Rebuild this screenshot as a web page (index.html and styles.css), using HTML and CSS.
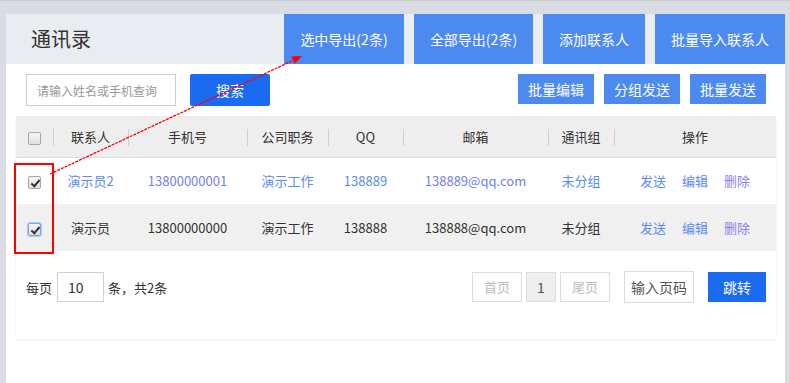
FILE: index.html
```html
<!DOCTYPE html>
<html>
<head>
    <meta charset="utf-8">
    <title>通讯录</title>
    <link rel="stylesheet" href="styles.css">
</head>
<body>
    <div class="page">
        <div class="panel">
            <div class="panel-head">
                <h1 class="title">通讯录</h1>
                <div class="head-actions">
                    <a class="head-btn w120">选中导出(2条)</a>
                    <a class="head-btn w119">全部导出(2条)</a>
                    <a class="head-btn w102">添加联系人</a>
                    <a class="head-btn w130">批量导入联系人</a>
                </div>
            </div>

            <div class="toolbar">
                <input class="search-input" type="text" placeholder="请输入姓名或手机查询">
                <button class="btn-search">搜索</button>
                <div class="toolbar-right">
                    <button class="btn-light">批量编辑</button>
                    <button class="btn-light">分组发送</button>
                    <button class="btn-light">批量发送</button>
                </div>
            </div>

            <div class="card">
                <table class="contacts">
                    <colgroup>
                        <col style="width:37px">
                        <col style="width:75px">
                        <col style="width:119px">
                        <col style="width:81px">
                        <col style="width:75px">
                        <col style="width:145px">
                        <col style="width:66px">
                        <col style="width:162px">
                    </colgroup>
                    <thead>
                        <tr>
                            <th><input class="cb" type="checkbox"></th>
                            <th>联系人</th>
                            <th>手机号</th>
                            <th>公司职务</th>
                            <th>QQ</th>
                            <th>邮箱</th>
                            <th>通讯组</th>
                            <th>操作</th>
                        </tr>
                    </thead>
                    <tbody>
                        <tr class="row-link">
                            <td><input class="cb" type="checkbox" checked></td>
                            <td class="link">演示员2</td>
                            <td class="link-alt">13800000001</td>
                            <td class="link">演示工作</td>
                            <td class="link">138889</td>
                            <td class="link-alt">138889@qq.com</td>
                            <td class="link">未分组</td>
                            <td class="ops">
                                <a class="op">发送</a><a class="op">编辑</a><a class="op op-del">删除</a>
                            </td>
                        </tr>
                        <tr class="row-alt">
                            <td><input class="cb cb-focus" type="checkbox" checked></td>
                            <td>演示员</td>
                            <td>13800000000</td>
                            <td>演示工作</td>
                            <td>138888</td>
                            <td>138888@qq.com</td>
                            <td>未分组</td>
                            <td class="ops">
                                <a class="op">发送</a><a class="op">编辑</a><a class="op op-del">删除</a>
                            </td>
                        </tr>
                    </tbody>
                </table>

                <div class="pager">
                    <div class="pager-size">
                        <span>每页</span>
                        <input class="size-input" type="text" value="10">
                        <span>条，共2条</span>
                    </div>
                    <div class="pager-nav">
                        <a class="page-btn disabled">首页</a>
                        <a class="page-btn current">1</a>
                        <a class="page-btn disabled">尾页</a>
                        <input class="page-input" type="text" placeholder="输入页码">
                        <button class="btn-jump">跳转</button>
                    </div>
                </div>
            </div>
        </div>

        <div class="mark-box"></div>
        <svg class="mark-arrow" width="790" height="383" viewBox="0 0 790 383">
            <line x1="50" y1="173" x2="294" y2="59" stroke="#f00" stroke-width="1.3" stroke-dasharray="3 1"/>
            <polygon points="302,55 294.6,62.8 291.2,55.6" fill="#f00"/>
        </svg>
    </div>
</body>
</html>
```

FILE: styles.css
```css
* {
    margin: 0;
    padding: 0;
    box-sizing: border-box;
    font-family: "Noto Sans CJK SC", "Noto Sans", sans-serif;
}

body {
    background: #d9dce3;
    color: #333;
    font-size: 13px;
}

.page {
    position: relative;
    width: 790px;
    height: 383px;
    padding: 13px 5px 0 6px;
    border-top: 1px solid #c9ccd2;
    overflow: hidden;
}

.panel {
    background: #fff;
    height: 370px;
}

/* header */
.panel-head {
    display: flex;
    height: 50px;
    background: #e9ecf0;
}

.title {
    font-size: 20px;
    font-weight: 400;
    line-height: 50px;
    padding-left: 25px;
    color: #333;
}

.head-actions {
    display: flex;
    gap: 10px;
    margin-left: auto;
}

.head-btn {
    display: block;
    height: 50px;
    line-height: 50px;
    text-align: center;
    background: #4d8af0;
    color: #fff;
    font-size: 14px;
}

.w120 { width: 120px; }
.w119 { width: 119px; }
.w102 { width: 102px; }
.w130 { width: 130px; }

/* toolbar */
.toolbar {
    display: flex;
    align-items: flex-start;
    padding: 10px 19px 0 20px;
    height: 52px;
}

.search-input {
    width: 150px;
    height: 32px;
    border: 1px solid #ccc;
    padding: 0 10px;
    font-size: 12px;
    outline: none;
}

.search-input::placeholder {
    color: #999;
}

.btn-search {
    width: 80px;
    height: 32px;
    margin-left: 14px;
    border: none;
    border-radius: 2px;
    background: #1b6bf0;
    color: #fff;
    font-size: 14px;
}

.toolbar-right {
    display: flex;
    gap: 10px;
    margin-left: auto;
}

.btn-light {
    width: 76px;
    height: 30px;
    border: none;
    background: #4d8af0;
    color: #fff;
    font-size: 14px;
}

/* table card */
.card {
    margin: 0 9px 0 10px;
    border-radius: 4px;
    box-shadow: 0 1px 3px rgba(0, 0, 0, 0.08);
    background: #fff;
}

.contacts {
    width: 760px;
    border-collapse: collapse;
    table-layout: fixed;
}

.contacts th {
    position: relative;
    height: 41px;
    background: #eeeeee;
    border-bottom: 1px solid #dcdcdc;
    font-weight: 400;
    font-size: 13px;
    color: #333;
    text-align: center;
}

.contacts th + th::before {
    content: "";
    position: absolute;
    left: 0;
    top: 13px;
    height: 17px;
    border-left: 1px solid #cfcfcf;
}

.contacts td {
    height: 47px;
    text-align: center;
    font-size: 13px;
    white-space: nowrap;
}

.row-alt td {
    background: #f0f0f0;
}

.link { color: #5a8cf0; }
.link-alt { color: #737fee; }

.op {
    color: #5a8cf0;
    margin: 0 8px;
}

.op-del {
    color: #8d80ec;
}

/* checkbox */
.cb {
    appearance: none;
    position: relative;
    display: inline-block;
    width: 13px;
    height: 13px;
    border: 1px solid #a8a8a8;
    border-radius: 2px;
    background: linear-gradient(#f7f7f7, #dedede);
    vertical-align: middle;
}

.cb:checked::after {
    content: "";
    position: absolute;
    left: 3.5px;
    top: 1px;
    width: 3px;
    height: 7px;
    border: solid #333;
    border-width: 0 2px 2px 0;
    transform: rotate(40deg);
}

.cb-focus {
    border-color: #7ba6ee;
    box-shadow: 0 0 0 1px #aac7f6;
}

/* pager */
.pager {
    display: flex;
    align-items: center;
    padding: 20px 10px 36px;
}

.pager-size {
    display: flex;
    align-items: center;
    gap: 4px;
    font-size: 13px;
}

.size-input {
    width: 47px;
    height: 30px;
    border: 1px solid #c9d2dd;
    padding: 0 10px;
    font-size: 14px;
    color: #333;
    margin-left: 1px;
}

.pager-nav {
    display: flex;
    align-items: center;
    margin-left: auto;
}

.page-btn {
    display: block;
    width: 50px;
    height: 30px;
    line-height: 28px;
    text-align: center;
    border: 1px solid #ddd;
    font-size: 13px;
    margin-right: 4px;
}

.page-btn.disabled {
    color: #bbb;
}

.page-btn.current {
    width: 30px;
    background: #eee;
    color: #555;
    font-size: 14px;
}

.page-btn:last-of-type {
    margin-right: 0;
}

.page-input {
    width: 70px;
    height: 32px;
    margin-left: 14px;
    border: 1px solid #ddd;
    padding: 0 6px;
    font-size: 14px;
    text-align: center;
}

.page-input::placeholder {
    color: #555;
}

.btn-jump {
    width: 58px;
    height: 30px;
    margin-left: 14px;
    border: none;
    background: #1b6bf0;
    color: #fff;
    font-size: 14px;
}

/* annotation overlay */
.mark-box {
    position: absolute;
    left: 14px;
    top: 162px;
    width: 40px;
    height: 91px;
    border: 2px solid #f00;
}

.mark-arrow {
    position: absolute;
    left: 0;
    top: 0;
    pointer-events: none;
}
```
